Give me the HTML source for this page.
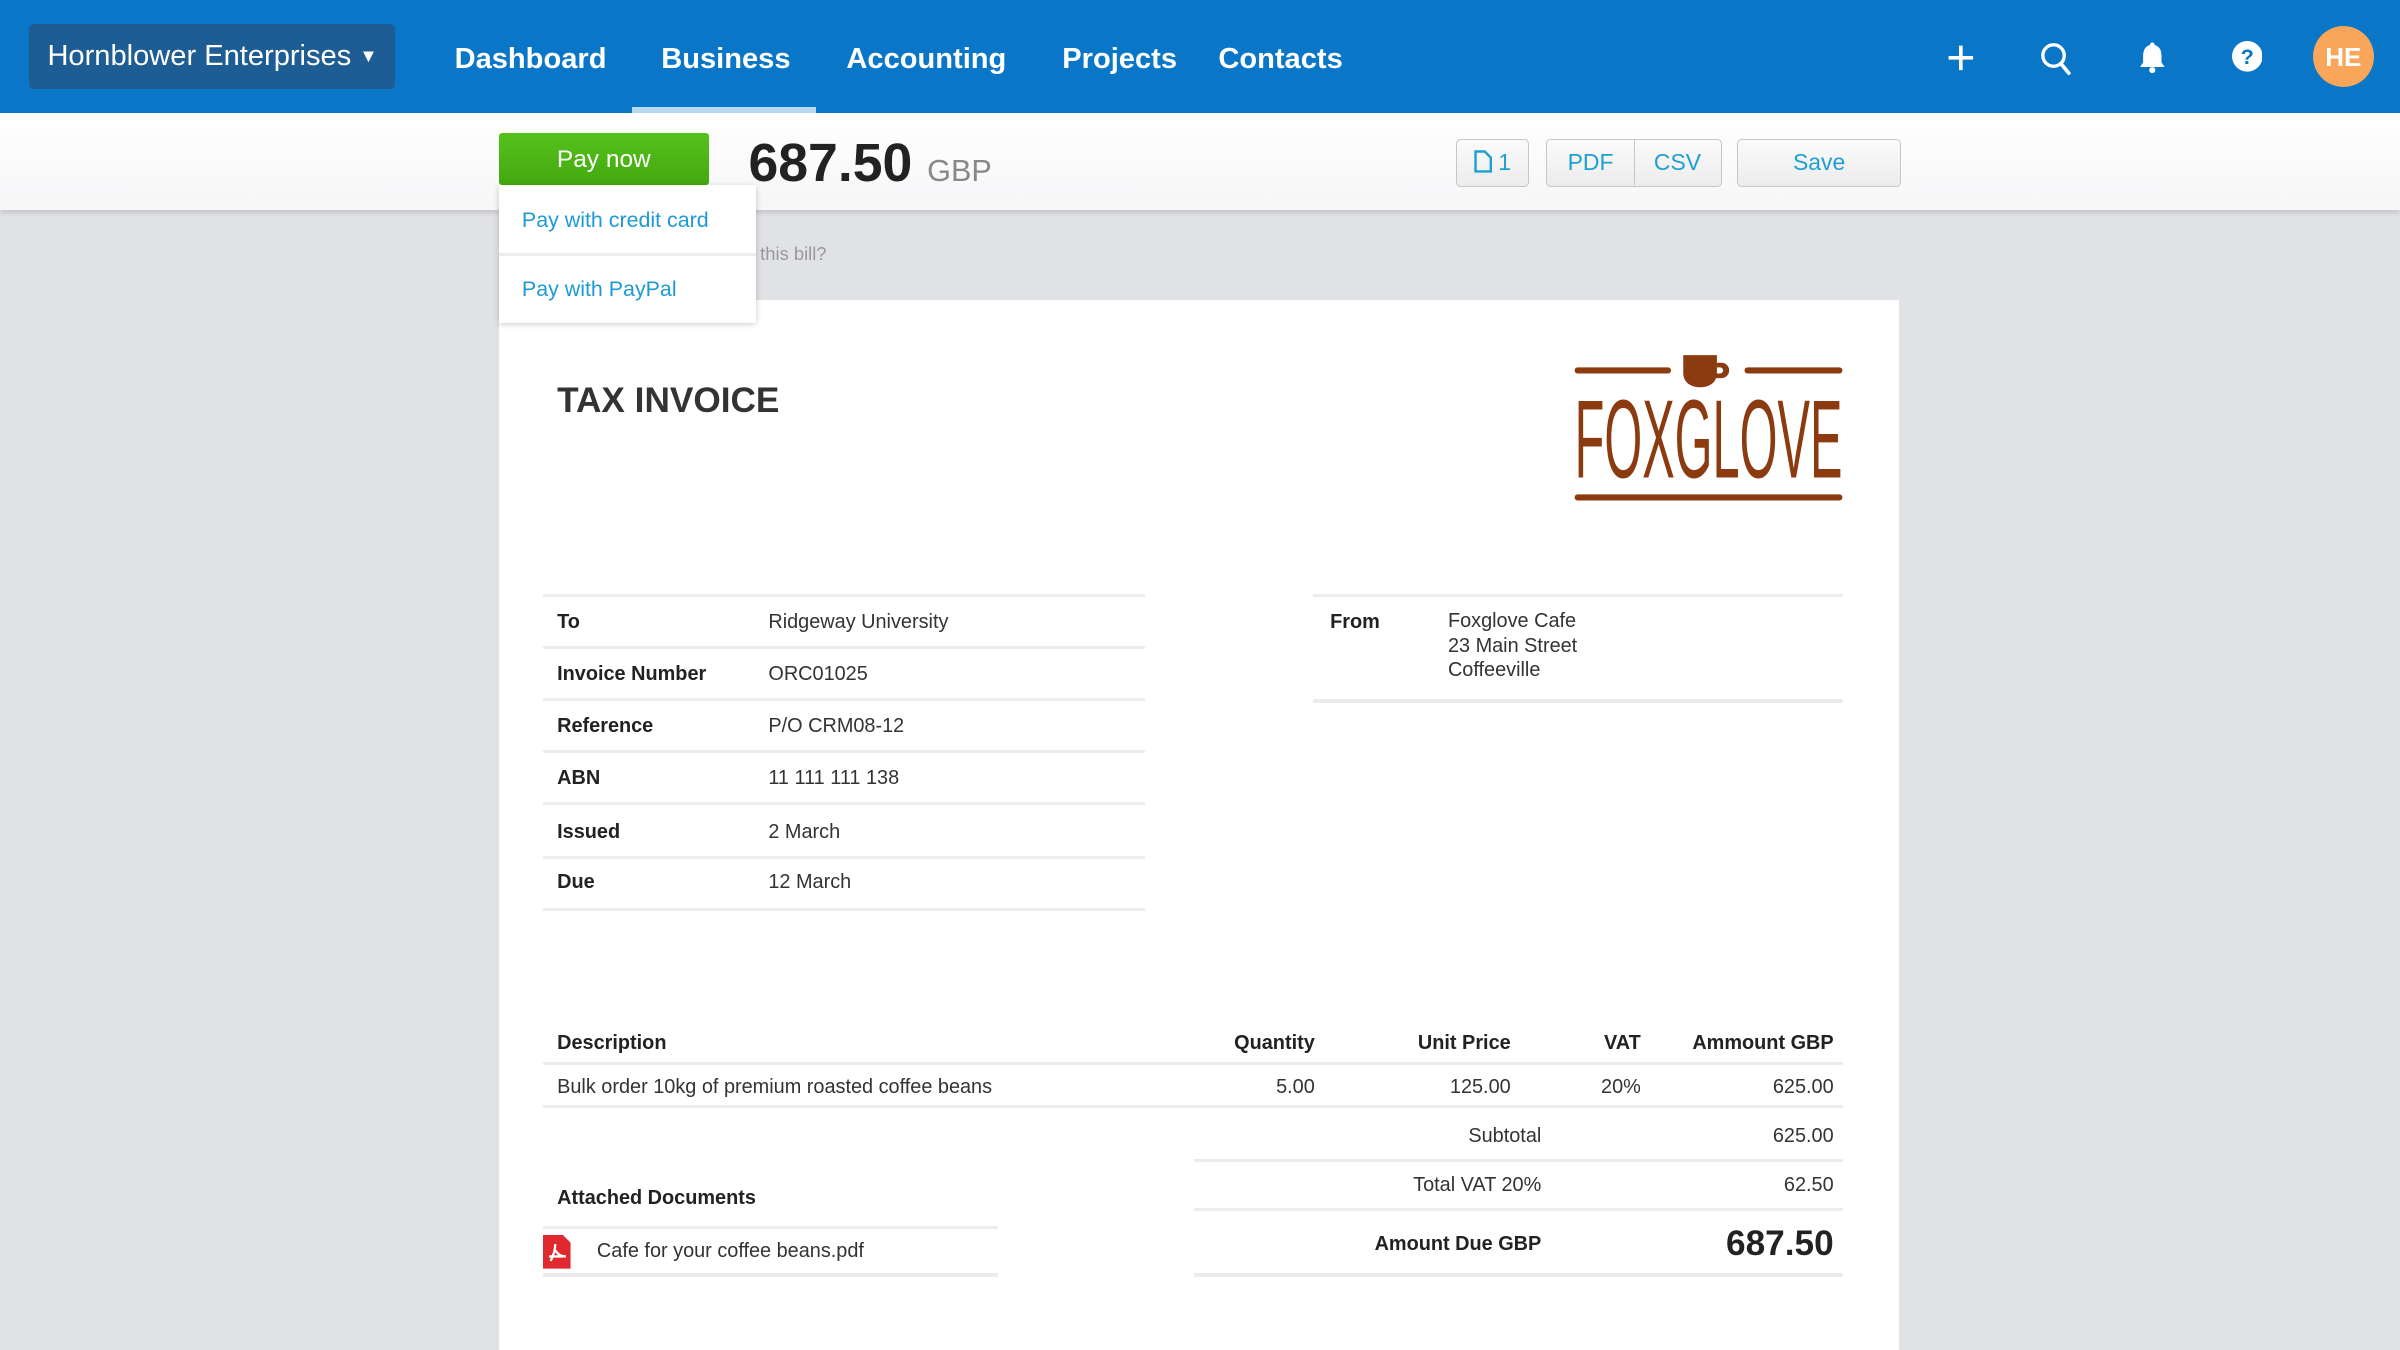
<!DOCTYPE html>
<html><head><meta charset="utf-8"><style>
*{margin:0;padding:0;box-sizing:border-box}
html,body{width:2400px;height:1350px;overflow:hidden;background:#e1e2e5}
#w{zoom:1.5306;width:1568px;height:882px;position:relative;font-family:"Liberation Sans",sans-serif;background:#e1e2e5;overflow:hidden}
.a{position:absolute;white-space:nowrap}
.nav{left:0;top:0;width:1568px;height:74px;background:#0a76c7}
.org{left:19px;top:16px;width:239px;height:42px;background:#1d5d93;border-radius:3px;color:#fff;font-size:19px;line-height:42px;padding-left:12px}
.ni{color:#fff;font-size:19px;font-weight:bold;top:27px;line-height:24px}
.tb{left:0;top:74px;width:1568px;height:63px;background:linear-gradient(#fff,#f6f6f8);box-shadow:0 2px 3px rgba(0,0,0,.12)}
.btn{border:1px solid #c4c6c9;border-radius:3px;background:linear-gradient(#fbfbfb,#ececec);color:#1f9fd3;font-size:15px;line-height:29px;text-align:center;top:91px;height:31px}
.t{font-size:13px;color:#333;line-height:17px}
.b{font-weight:bold;color:#222}
.hl{height:2px;background:#ececec}
.r{text-align:right}
</style></head><body><div id="w">
<div class="a nav"></div>
<div class="a org">Hornblower Enterprises <span style="font-size:12px;position:relative;top:-2px">&#9660;</span></div>
<div class="a ni" style="left:297px">Dashboard</div>
<div class="a ni" style="left:432px">Business</div>
<div class="a ni" style="left:553px">Accounting</div>
<div class="a ni" style="left:694px">Projects</div>
<div class="a ni" style="left:796px">Contacts</div>
<div class="a" style="left:413px;top:70px;width:120px;height:4px;background:#b9d9f1"></div>
<svg class="a" style="left:1270px;top:27px" width="22" height="22" viewBox="0 0 22 22"><path d="M11 3v16M3 11h16" stroke="#fff" stroke-width="2.4"/></svg>
<svg class="a" style="left:1332px;top:27px" width="22" height="24" viewBox="0 0 22 24"><circle cx="9.5" cy="9.5" r="7" stroke="#fff" stroke-width="2.2" fill="none"/><path d="M14.5 15l5 6" stroke="#fff" stroke-width="2.4" stroke-linecap="round"/></svg>
<svg class="a" style="left:1396px;top:27px" width="20" height="22" viewBox="0 0 20 22"><path d="M10 1c1 0 1.5.8 1.5 1.6C15 3.5 16 6.5 16 10v4l2 3H2l2-3v-4c0-3.5 1-6.5 4.5-7.4C8.5 1.8 9 1 10 1z" fill="#fff"/><circle cx="10" cy="19" r="2" fill="#fff"/></svg>
<svg class="a" style="left:1458px;top:27px" width="20" height="20" viewBox="0 0 20 20"><circle cx="10" cy="10" r="10" fill="#fff"/><text x="10" y="15" text-anchor="middle" font-family="Liberation Sans" font-weight="bold" font-size="14" fill="#0a76c7">?</text></svg>
<div class="a" style="left:1511px;top:17px;width:40px;height:40px;border-radius:50%;background:#f9a65a;color:#fff;font-weight:bold;font-size:17px;line-height:41px;text-align:center">HE</div>

<div class="a tb"></div>
<div class="a" style="left:326px;top:87px;width:137px;height:34px;background:linear-gradient(#55c21c,#43a80f);border-radius:2px;color:#fff;font-size:16px;line-height:35px;text-align:center">Pay now</div>
<div class="a" style="left:489px;top:87px;font-size:35px;font-weight:bold;color:#222;line-height:40px">687.50 <span style="font-size:20px;font-weight:normal;color:#888">GBP</span></div>
<div class="a btn" style="left:951px;width:48px"><svg width="12" height="15" viewBox="0 0 12 15" style="vertical-align:-2px"><path d="M1 1h6l4 4v9H1z" fill="none" stroke="#1f9fd3" stroke-width="1.6"/></svg> 1</div>
<div class="a btn" style="left:1010px;width:115px"><span style="display:inline-block;width:57px;border-right:1px solid #c4c6c9">PDF</span><span style="display:inline-block;width:56px">CSV</span></div>
<div class="a btn" style="left:1135px;width:107px">Save</div>

<div class="a" style="left:490px;top:159px;font-size:12px;color:#999">t this bill?</div>
<div class="a" style="left:326px;top:196px;width:915px;height:700px;background:#fff"></div>
<div class="a" style="left:326px;top:121px;width:168px;height:90px;background:#fff;box-shadow:0 1px 4px rgba(0,0,0,.2)"></div>
<div class="a" style="left:341px;top:136px;font-size:14px;color:#1d9ad6">Pay with credit card</div>
<div class="a hl" style="left:326px;top:165px;width:168px"></div>
<div class="a" style="left:341px;top:181px;font-size:14px;color:#1d9ad6">Pay with PayPal</div>

<div class="a" style="left:364px;top:249px;font-size:23px;font-weight:bold;color:#333">TAX INVOICE</div>
<svg class="a" style="left:1026px;top:228px" width="182" height="104" viewBox="0 0 182 104"><g fill="#8c3b10"><rect x="3" y="12" width="63" height="4" rx="2"/><rect x="114" y="12" width="64" height="4" rx="2"/><path d="M74 4h22v12c0 5-4 9-11 9s-11-4-11-9z"/><path d="M96 9h3a5 5 0 0 1 0 10h-4v-3h3a2 2 0 0 0 0-4h-2z"/><rect x="3" y="95" width="175" height="4" rx="2"/><text x="3" y="84" font-family="Liberation Sans" font-size="73" textLength="175" lengthAdjust="spacingAndGlyphs">FOXGLOVE</text></g></svg>

<div class="a hl" style="left:355px;top:388px;width:393px"></div>
<div class="a hl" style="left:355px;top:422px;width:393px"></div>
<div class="a hl" style="left:355px;top:456px;width:393px"></div>
<div class="a hl" style="left:355px;top:490px;width:393px"></div>
<div class="a hl" style="left:355px;top:524px;width:393px"></div>
<div class="a hl" style="left:355px;top:559px;width:393px"></div>
<div class="a hl" style="left:355px;top:593px;width:393px"></div>
<div class="a t b" style="left:364px;top:398px">To</div><div class="a t" style="left:502px;top:398px">Ridgeway University</div>
<div class="a t b" style="left:364px;top:432px">Invoice Number</div><div class="a t" style="left:502px;top:432px">ORC01025</div>
<div class="a t b" style="left:364px;top:466px">Reference</div><div class="a t" style="left:502px;top:466px">P/O CRM08-12</div>
<div class="a t b" style="left:364px;top:500px">ABN</div><div class="a t" style="left:502px;top:500px">11 111 111 138</div>
<div class="a t b" style="left:364px;top:535px">Issued</div><div class="a t" style="left:502px;top:535px">2 March</div>
<div class="a t b" style="left:364px;top:568px">Due</div><div class="a t" style="left:502px;top:568px">12 March</div>

<div class="a hl" style="left:858px;top:388px;width:346px"></div>
<div class="a hl" style="left:858px;top:457px;width:346px"></div>
<div class="a t b" style="left:869px;top:398px">From</div>
<div class="a t" style="left:946px;top:398px;line-height:16px">Foxglove Cafe<br>23 Main Street<br>Coffeeville</div>

<div class="a t b" style="left:364px;top:673px">Description</div>
<div class="a t b r" style="left:759px;width:100px;top:673px">Quantity</div>
<div class="a t b r" style="left:887px;width:100px;top:673px">Unit Price</div>
<div class="a t b r" style="left:1002px;width:70px;top:673px">VAT</div>
<div class="a t b r" style="left:1078px;width:120px;top:673px">Ammount GBP</div>
<div class="a hl" style="left:355px;top:694px;width:849px"></div>
<div class="a t" style="left:364px;top:702px">Bulk order 10kg of premium roasted coffee beans</div>
<div class="a t r" style="left:759px;width:100px;top:702px">5.00</div>
<div class="a t r" style="left:887px;width:100px;top:702px">125.00</div>
<div class="a t r" style="left:1002px;width:70px;top:702px">20%</div>
<div class="a t r" style="left:1078px;width:120px;top:702px">625.00</div>
<div class="a hl" style="left:355px;top:722px;width:849px"></div>

<div class="a t r" style="left:857px;width:150px;top:734px">Subtotal</div><div class="a t r" style="left:1078px;width:120px;top:734px">625.00</div>
<div class="a hl" style="left:780px;top:757px;width:424px"></div>
<div class="a t r" style="left:857px;width:150px;top:766px">Total VAT 20%</div><div class="a t r" style="left:1078px;width:120px;top:766px">62.50</div>
<div class="a hl" style="left:780px;top:789px;width:424px"></div>
<div class="a t b r" style="left:857px;width:150px;top:804px">Amount Due GBP</div>
<div class="a b r" style="left:1058px;width:140px;top:799px;font-size:23px;line-height:28px">687.50</div>
<div class="a hl" style="left:780px;top:832px;width:424px"></div>

<div class="a t b" style="left:364px;top:774px">Attached Documents</div>
<div class="a hl" style="left:355px;top:801px;width:297px"></div>
<svg class="a" style="left:355px;top:807px" width="18" height="22" viewBox="0 0 18 22"><path d="M0 0h13l5 5v17H0z" fill="#e0282f"/><path d="M5 17c2-4 3-8 3-11M8 10c2 3 4 4 7 4M4 14h9" stroke="#fff" stroke-width="1.5" fill="none"/></svg>
<div class="a t" style="left:390px;top:809px">Cafe for your coffee beans.pdf</div>
<div class="a hl" style="left:355px;top:832px;width:297px"></div>
</div></body></html>
